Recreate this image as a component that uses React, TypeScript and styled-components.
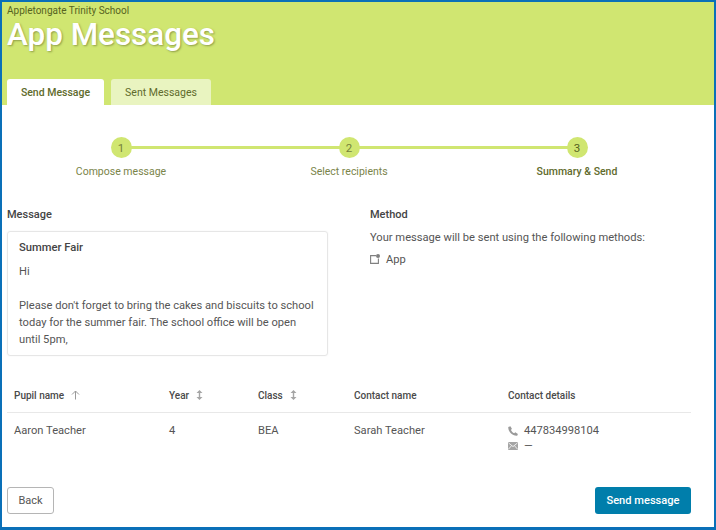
import styled, { createGlobalStyle } from 'styled-components';

const GlobalStyle = createGlobalStyle`
  html, body {
    margin: 0;
    padding: 0;
    background: #fff;
  }
  * {
    box-sizing: border-box;
  }
`;

const Frame = styled.div`
  width: 716px;
  height: 530px;
  border-style: solid;
  border-color: #0a70b8;
  border-width: 2px 2px 3px 2px;
  font-family: Roboto, "Liberation Sans", sans-serif;
  color: #4a4a4a;
  background: #fff;
  overflow: hidden;
  display: flex;
  flex-direction: column;
`;

const Header = styled.header`
  height: 103px;
  flex: none;
  background: #d0e671;
  padding: 3px 0 0 5px;
  display: flex;
  flex-direction: column;
`;

const School = styled.div`
  font-size: 10px;
  line-height: 12px;
  color: #56631f;
`;

const Title = styled.h1`
  margin: 0;
  font-size: 31.4px;
  line-height: 36px;
  font-weight: 500;
  color: #fff;
  text-shadow: 1px 1px 2px rgba(90, 100, 40, 0.55);
`;

const Tabs = styled.div`
  margin-top: auto;
  display: flex;
  gap: 7px;
`;

const Tab = styled.div<{ $active?: boolean }>`
  width: ${(p) => (p.$active ? '97px' : '100px')};
  height: 26px;
  border-radius: 3px 3px 0 0;
  background: ${(p) => (p.$active ? '#fff' : '#e9f4c0')};
  color: #5f6b2c;
  font-size: 10.5px;
  font-weight: ${(p) => (p.$active ? 500 : 400)};
  display: flex;
  align-items: center;
  justify-content: center;
`;

const Content = styled.main`
  flex: 1;
  padding: 0 23px 13px 5px;
  display: flex;
  flex-direction: column;
`;

const Stepper = styled.div`
  margin-top: 32px;
  display: grid;
  grid-template-columns: repeat(3, 1fr);
`;

const Step = styled.div<{ $first?: boolean }>`
  position: relative;
  display: flex;
  flex-direction: column;
  align-items: center;

  ${(p) =>
    !p.$first &&
    `&::before {
      content: "";
      position: absolute;
      top: 9px;
      right: 50%;
      width: 100%;
      height: 3px;
      background: #d0e671;
    }`}
`;

const StepDot = styled.div<{ $active?: boolean }>`
  position: relative;
  z-index: 1;
  width: 21px;
  height: 21px;
  border-radius: 50%;
  background: #d0e671;
  color: ${(p) => (p.$active ? '#56631f' : '#75823a')};
  font-size: 11.5px;
  display: flex;
  align-items: center;
  justify-content: center;
`;

const StepLabel = styled.div<{ $active?: boolean }>`
  margin-top: 7px;
  font-size: 10.5px;
  line-height: 14px;
  color: ${(p) => (p.$active ? '#5f6b2c' : '#7a8449')};
  font-weight: ${(p) => (p.$active ? 500 : 400)};
`;

const Columns = styled.section`
  margin-top: 29px;
  display: grid;
  grid-template-columns: 363px 1fr;
`;

const SectionTitle = styled.h2`
  margin: 0;
  font-size: 11px;
  line-height: 14px;
  font-weight: 500;
  color: #444;
`;

const Card = styled.div`
  margin-top: 9px;
  width: 321px;
  height: 125px;
  padding: 9px 11px;
  border: 1px solid #e6e6e6;
  border-radius: 3px;
  box-shadow: 0 0 2px rgba(0, 0, 0, 0.06);
`;

const CardTitle = styled.div`
  font-size: 11.2px;
  line-height: 14px;
  font-weight: 500;
  color: #444;
`;

const CardBody = styled.p`
  margin: 8px 0 0;
  font-size: 11.15px;
  line-height: 17px;
  color: #555;
  white-space: pre-line;
`;

const MethodText = styled.div`
  margin-top: 9px;
  font-size: 11.15px;
  line-height: 14px;
  color: #555;
`;

const MethodRow = styled.div`
  margin-top: 8px;
  display: flex;
  align-items: flex-start;
  gap: 6px;
  font-size: 11.15px;
  line-height: 14px;
  color: #555;

  svg {
    margin-top: 1px;
  }
`;

const Table = styled.div`
  margin-top: 30px;
`;

const Row = styled.div<{ $head?: boolean }>`
  display: grid;
  grid-template-columns: 155px 89px 96px 154px 1fr;
  padding-left: 7px;
  align-items: start;
  ${(p) =>
    p.$head
      ? `height: 27px;
         padding-bottom: 8px;
         align-items: center;
         border-bottom: 1px solid #e8e8e8;
         font-size: 10px;
         font-weight: 500;
         color: #4a4a4a;`
      : `padding-top: 11px;
         font-size: 11.15px;
         line-height: 14px;
         color: #555;`}
`;

const HeadCell = styled.div`
  display: flex;
  align-items: center;
  gap: 7px;
`;

const ContactList = styled.div`
  margin-top: -1px;
`;

const ContactLine = styled.div`
  display: flex;
  align-items: center;
  gap: 6px;
  height: 15px;
`;

const Footer = styled.footer`
  margin-top: auto;
  display: flex;
  justify-content: space-between;
`;

const BackButton = styled.button`
  width: 47px;
  height: 27px;
  padding: 0;
  background: #fff;
  border: 1px solid #b5b5b5;
  border-radius: 3px;
  color: #555;
  font-family: inherit;
  font-size: 11px;
`;

const SendButton = styled.button`
  width: 96px;
  height: 27px;
  padding: 0;
  background: #007eab;
  border: none;
  border-radius: 3px;
  color: #fff;
  font-family: inherit;
  font-size: 11.1px;
  font-weight: 500;
`;

const ArrowUp = () => (
  <svg width="9" height="10" viewBox="0 0 9 10" fill="none" stroke="#9a9a9a" strokeWidth="1">
    <path d="M4.5 9.5V1M1 4.5 4.5 1 8 4.5" />
  </svg>
);

const SortIcon = () => (
  <svg width="7" height="10" viewBox="0 0 7 10" fill="#a5a5a5">
    <path d="M3.5 0 6.5 3H4.2v4h2.3l-3 3-3-3h2.3V3H.5z" />
  </svg>
);

const AppIcon = () => (
  <svg width="10" height="10" viewBox="0 0 10 10" fill="none">
    <path d="M6 1.6H.6v7.8h7.8V4.5" stroke="#808080" strokeWidth="1.1" />
    <circle cx="8" cy="2" r="2" fill="#808080" />
  </svg>
);

const PhoneIcon = () => (
  <svg width="10" height="10" viewBox="0 0 10 10" fill="#9a9a9a">
    <path d="M2.4.2 3.9 2.8 3 4C3.6 5.4 4.8 6.6 6.2 7.2L7.3 6.3 9.9 7.9 9.2 9.7C4.6 10.2-.1 5.4.3.9z" />
  </svg>
);

const MailIcon = () => (
  <svg width="10" height="8" viewBox="0 0 10 8">
    <rect width="10" height="8" rx="1" fill="#a5a5a5" />
    <path d="M.6 1 5 4.6 9.4 1M.6 7 3.6 3.6M9.4 7 6.4 3.6" fill="none" stroke="#fff" strokeWidth=".8" />
  </svg>
);

const App = () => (
  <Frame>
    <GlobalStyle />
    <Header>
      <School>Appletongate Trinity School</School>
      <Title>App Messages</Title>
      <Tabs>
        <Tab $active>Send Message</Tab>
        <Tab>Sent Messages</Tab>
      </Tabs>
    </Header>
    <Content>
      <Stepper>
        <Step $first>
          <StepDot>1</StepDot>
          <StepLabel>Compose message</StepLabel>
        </Step>
        <Step>
          <StepDot>2</StepDot>
          <StepLabel>Select recipients</StepLabel>
        </Step>
        <Step>
          <StepDot $active>3</StepDot>
          <StepLabel $active>Summary &amp; Send</StepLabel>
        </Step>
      </Stepper>
      <Columns>
        <div>
          <SectionTitle>Message</SectionTitle>
          <Card>
            <CardTitle>Summer Fair</CardTitle>
            <CardBody>
              {"Hi\n\nPlease don't forget to bring the cakes and biscuits to school today for the summer fair. The school office will be open until 5pm,"}
            </CardBody>
          </Card>
        </div>
        <div>
          <SectionTitle>Method</SectionTitle>
          <MethodText>Your message will be sent using the following methods:</MethodText>
          <MethodRow>
            <AppIcon />
            App
          </MethodRow>
        </div>
      </Columns>
      <Table>
        <Row $head>
          <HeadCell>Pupil name <ArrowUp /></HeadCell>
          <HeadCell>Year <SortIcon /></HeadCell>
          <HeadCell>Class <SortIcon /></HeadCell>
          <HeadCell>Contact name</HeadCell>
          <HeadCell>Contact details</HeadCell>
        </Row>
        <Row>
          <div>Aaron Teacher</div>
          <div>4</div>
          <div>BEA</div>
          <div>Sarah Teacher</div>
          <ContactList>
            <ContactLine><PhoneIcon /> 447834998104</ContactLine>
            <ContactLine><MailIcon /> —</ContactLine>
          </ContactList>
        </Row>
      </Table>
      <Footer>
        <BackButton>Back</BackButton>
        <SendButton>Send message</SendButton>
      </Footer>
    </Content>
  </Frame>
);

export default App;
